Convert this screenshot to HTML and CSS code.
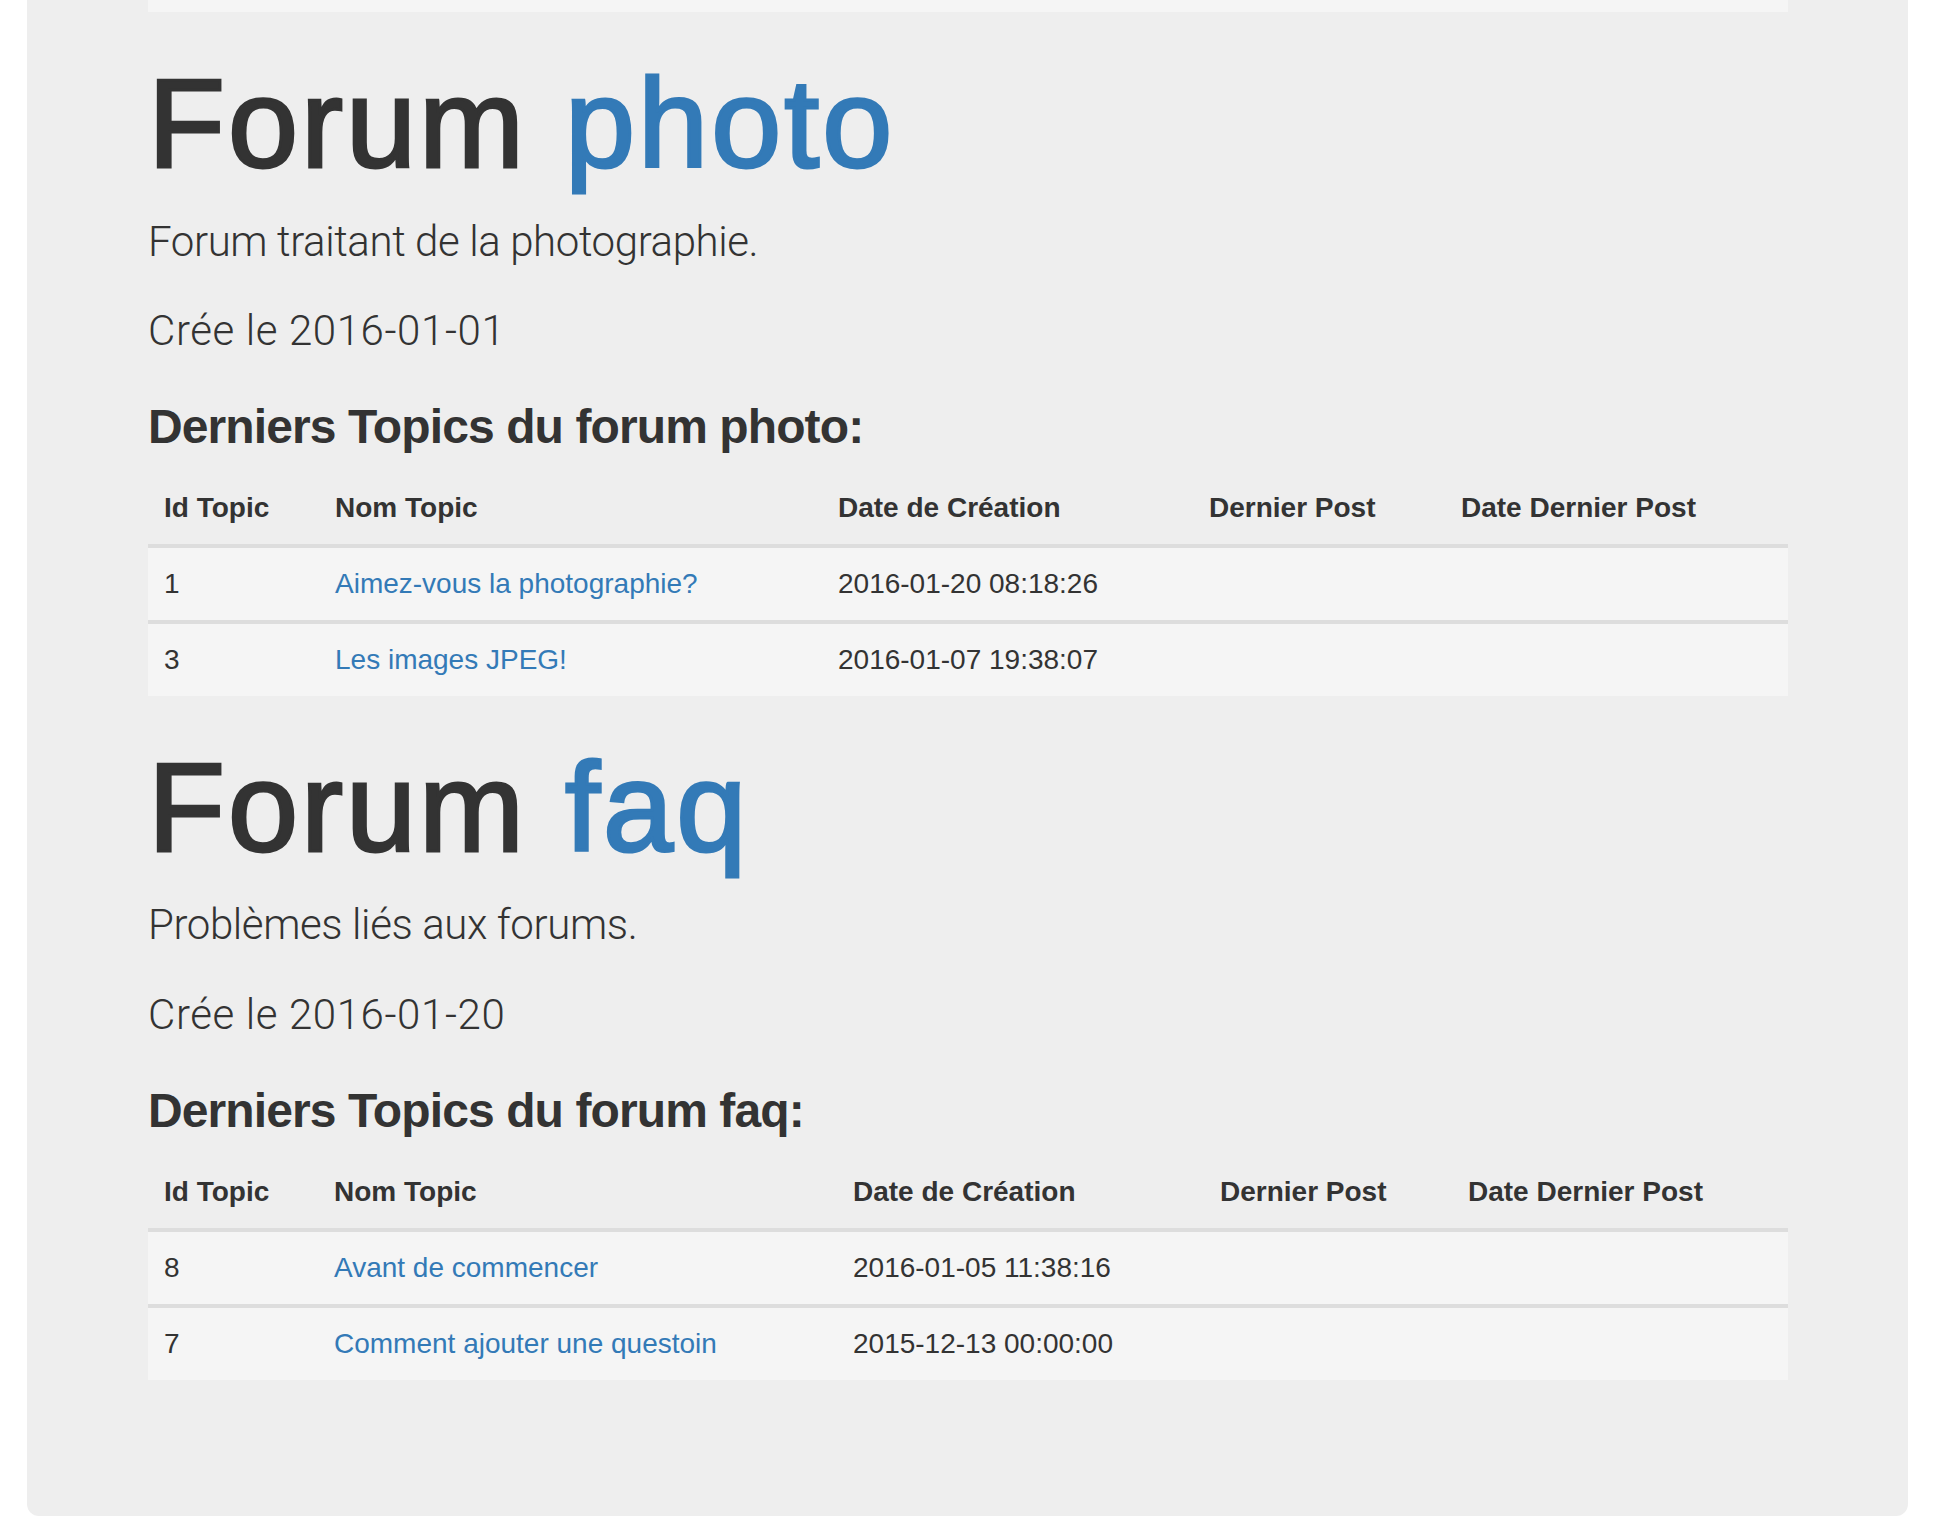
FILE: index.html
```html
<!DOCTYPE html>
<html lang="fr">
<head>
<meta charset="utf-8">
<title>Forums</title>
<link rel="stylesheet" href="styles.css">
</head>
<body>
<div class="jumbotron">
  <div class="table-tail"></div>

  <section class="forum">
    <h1 class="forum-title">Forum <span class="accent">photo</span></h1>
    <p class="lead">Forum traitant de la photographie.</p>
    <p class="lead created">Crée le 2016-01-01</p>
    <h3 class="topics-title">Derniers Topics du forum photo:</h3>
    <table class="topics topics-photo">
      <colgroup>
        <col class="c1"><col class="c2"><col class="c3"><col class="c4"><col class="c5">
      </colgroup>
      <thead>
        <tr><th>Id Topic</th><th>Nom Topic</th><th>Date de Création</th><th>Dernier Post</th><th>Date Dernier Post</th></tr>
      </thead>
      <tbody>
        <tr><td>1</td><td><a href="#">Aimez-vous la photographie?</a></td><td class="date">2016-01-20 08:18:26</td><td></td><td></td></tr>
        <tr><td>3</td><td><a href="#">Les images JPEG!</a></td><td class="date">2016-01-07 19:38:07</td><td></td><td></td></tr>
      </tbody>
    </table>
  </section>

  <section class="forum">
    <h1 class="forum-title">Forum <span class="accent">faq</span></h1>
    <p class="lead">Problèmes liés aux forums.</p>
    <p class="lead created">Crée le 2016-01-20</p>
    <h3 class="topics-title">Derniers Topics du forum faq:</h3>
    <table class="topics topics-faq">
      <colgroup>
        <col class="c1"><col class="c2"><col class="c3"><col class="c4"><col class="c5">
      </colgroup>
      <thead>
        <tr><th>Id Topic</th><th>Nom Topic</th><th>Date de Création</th><th>Dernier Post</th><th>Date Dernier Post</th></tr>
      </thead>
      <tbody>
        <tr><td>8</td><td><a href="#">Avant de commencer</a></td><td class="date">2016-01-05 11:38:16</td><td></td><td></td></tr>
        <tr><td>7</td><td><a href="#">Comment ajouter une questoin</a></td><td class="date">2015-12-13 00:00:00</td><td></td><td></td></tr>
      </tbody>
    </table>
  </section>
</div>
</body>
</html>
```

FILE: styles.css
```css
html, body {
  margin: 0;
  padding: 0;
  background: #ffffff;
}

body {
  font-family: "Liberation Sans", Arial, sans-serif;
  color: #333333;
}

.jumbotron {
  margin-left: 27px;
  width: 1881px;
  box-sizing: border-box;
  padding: 0 120px 136px 121px;
  background: #eeeeee;
  border-radius: 0 0 12px 12px;
}

.table-tail {
  height: 12px;
  background: #f5f5f5;
}

.forum-title {
  margin: 42px 0 0;
  font-size: 126px;
  line-height: 140px;
  font-weight: 400;
  letter-spacing: 3px;
  -webkit-text-stroke: 3px currentColor;
  color: #333333;
}

.accent {
  color: #337ab7;
}

.lead {
  margin: 17.5px 0 0;
  font-family: Roboto, "Liberation Sans", sans-serif;
  font-weight: 300;
  font-size: 42px;
  line-height: 60px;
  letter-spacing: -0.4px;
}

.lead.created {
  margin-top: 29.5px;
  letter-spacing: 0.6px;
}

.topics-title {
  margin: 38.4px 0 0;
  font-size: 48px;
  line-height: 56px;
  font-weight: 700;
  letter-spacing: -0.9px;
}

.topics {
  width: 100%;
  margin-top: 16.6px;
  border-collapse: separate;
  border-spacing: 0;
  table-layout: fixed;
}

.topics th {
  text-align: left;
  font-size: 28px;
  font-weight: 700;
  line-height: 40px;
  padding: 16px;
  border-bottom: 4px solid #dddddd;
  white-space: nowrap;
}

.topics td {
  font-size: 28px;
  line-height: 40px;
  padding: 16px;
  background: #f5f5f5;
  white-space: nowrap;
}

.topics tbody tr + tr td {
  border-top: 4px solid #dddddd;
}

.topics a {
  color: #337ab7;
  text-decoration: none;
}

.topics-photo .c1 { width: 171px; }
.topics-photo .c2 { width: 503px; }
.topics-photo .c3 { width: 371px; }
.topics-photo .c4 { width: 252px; }
.topics-photo .c5 { width: 343px; }

.topics-faq .c1 { width: 170px; }
.topics-faq .c2 { width: 519px; }
.topics-faq .c3 { width: 367px; }
.topics-faq .c4 { width: 248px; }
.topics-faq .c5 { width: 336px; }
```
